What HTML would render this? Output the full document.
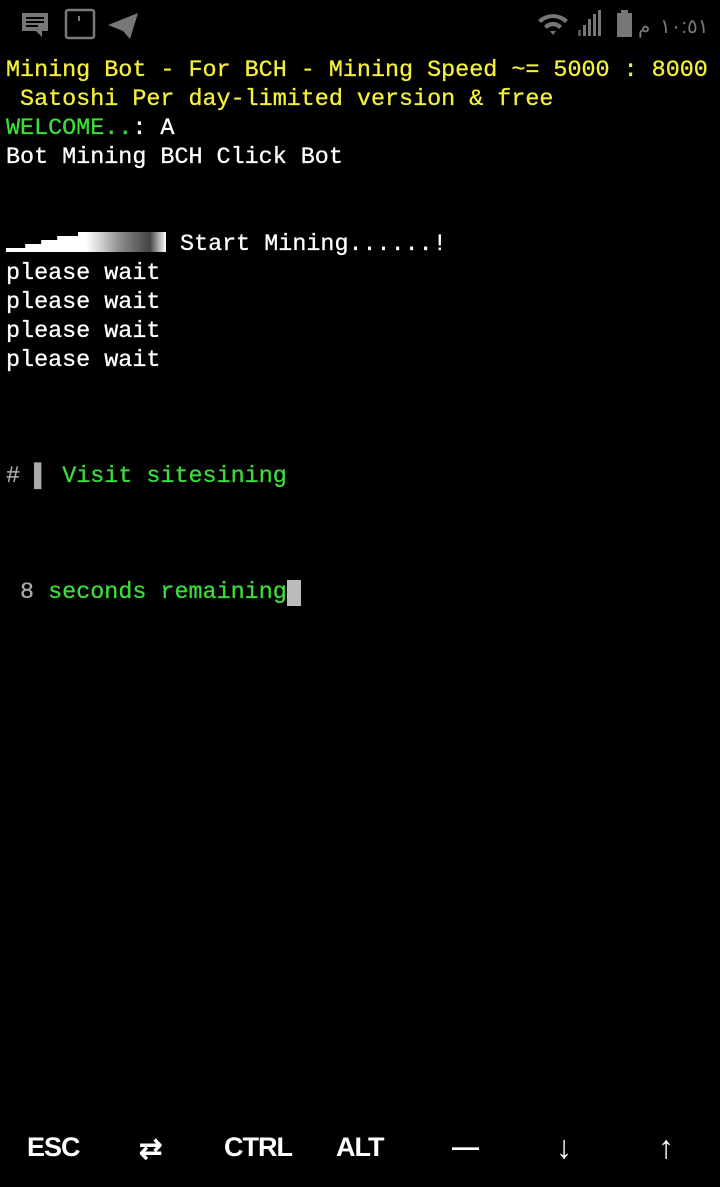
<!DOCTYPE html>
<html><head><meta charset="utf-8"><style>
html,body{margin:0;padding:0;background:#000;width:720px;height:1187px;overflow:hidden}
.t{position:absolute;left:6px;top:57px;font-family:"Liberation Mono",monospace;font-size:23.4px;line-height:29px;color:#fff;white-space:pre;-webkit-text-stroke:0.3px currentColor}
.y{color:#f5f03a}.g{color:#3ddc3d}.gr{color:#aaa}
.cur{background:#bbb;color:#000}
.sb{position:absolute;top:0;left:0;width:720px;height:50px}
.keys{position:absolute;top:1132px;left:0;width:720px;height:40px;font-family:"Liberation Sans",sans-serif;font-size:27px;font-weight:bold;color:#fff;letter-spacing:-1px}
.keys span{position:absolute;top:0}
</style></head><body>
<svg class="sb" width="720" height="50">
<g fill="#777">
<path d="M22 13h26v18h-6v6l-6-6H22z"/><rect x="26" y="17" width="18" height="2" fill="#000"/><rect x="26" y="21" width="18" height="2" fill="#000"/><rect x="26" y="25" width="12" height="2" fill="#000"/>
<rect x="66" y="10" width="28" height="28" rx="2" fill="none" stroke="#777" stroke-width="2.5"/><rect x="78" y="16" width="2" height="5"/>
<path d="M108 25l30-12-8 26-7-8z"/>
<path d="M538 20a22 22 0 0 1 30 0l-3 3a17 17 0 0 0-24 0zM544 26a12 12 0 0 1 18 0l-3 3a8 8 0 0 0-12 0zM550 31h6l-3 4z"/>
<rect x="578" y="30" width="3" height="6" fill="#555"/><rect x="583" y="25" width="3" height="11"/><rect x="588" y="19" width="3" height="17"/><rect x="593" y="14" width="3" height="22"/><rect x="598" y="10" width="3" height="26"/>
<rect x="617" y="13" width="15" height="24"/><rect x="621" y="10" width="7" height="3"/>
</g>
<text x="638" y="33" font-family="Liberation Sans,'Noto Sans CJK SC',sans-serif" font-size="20" fill="#777">م</text>
<text x="660" y="33" font-family="Liberation Sans,'Noto Sans CJK SC',sans-serif" font-size="20" fill="#777" direction="ltr" unicode-bidi="bidi-override">١٠:٥١</text>
</svg>
<div class="t"><span class="y">Mining Bot - For BCH - Mining Speed ~= 5000 : 8000
 Satoshi Per day-limited version &amp; free</span>
<span class="g">WELCOME..</span>: A
Bot Mining BCH Click Bot


<span style="display:inline-block;width:160px;height:20px;vertical-align:-2px;background:linear-gradient(90deg,#fff 0,#fff 50%,#ccc 60%,#888 72%,#444 90%,#fff 100%);clip-path:polygon(0 80%,12% 80%,12% 60%,22% 60%,22% 40%,32% 40%,32% 20%,45% 20%,45% 0,70% 0,100% 0,100% 100%,0 100%)"></span> Start Mining......!
please wait
please wait
please wait
please wait



<span class="gr">#</span> <span class="gr">▌</span> <span class="g">Visit sitesining</span>



 <span class="gr">8</span> <span class="g">seconds remaining</span><span class="cur"> </span></div>
<div class="keys">
<span style="left:27px">ESC</span>
<span style="left:139px;font-size:28px">⇄</span>
<span style="left:224px">CTRL</span>
<span style="left:336px">ALT</span>
<span style="left:452px">—</span>
<span style="left:556px;font-size:32px;top:-3px;font-weight:normal">↓</span>
<span style="left:658px;font-size:32px;top:-3px;font-weight:normal">↑</span>
</div>
</body></html>
